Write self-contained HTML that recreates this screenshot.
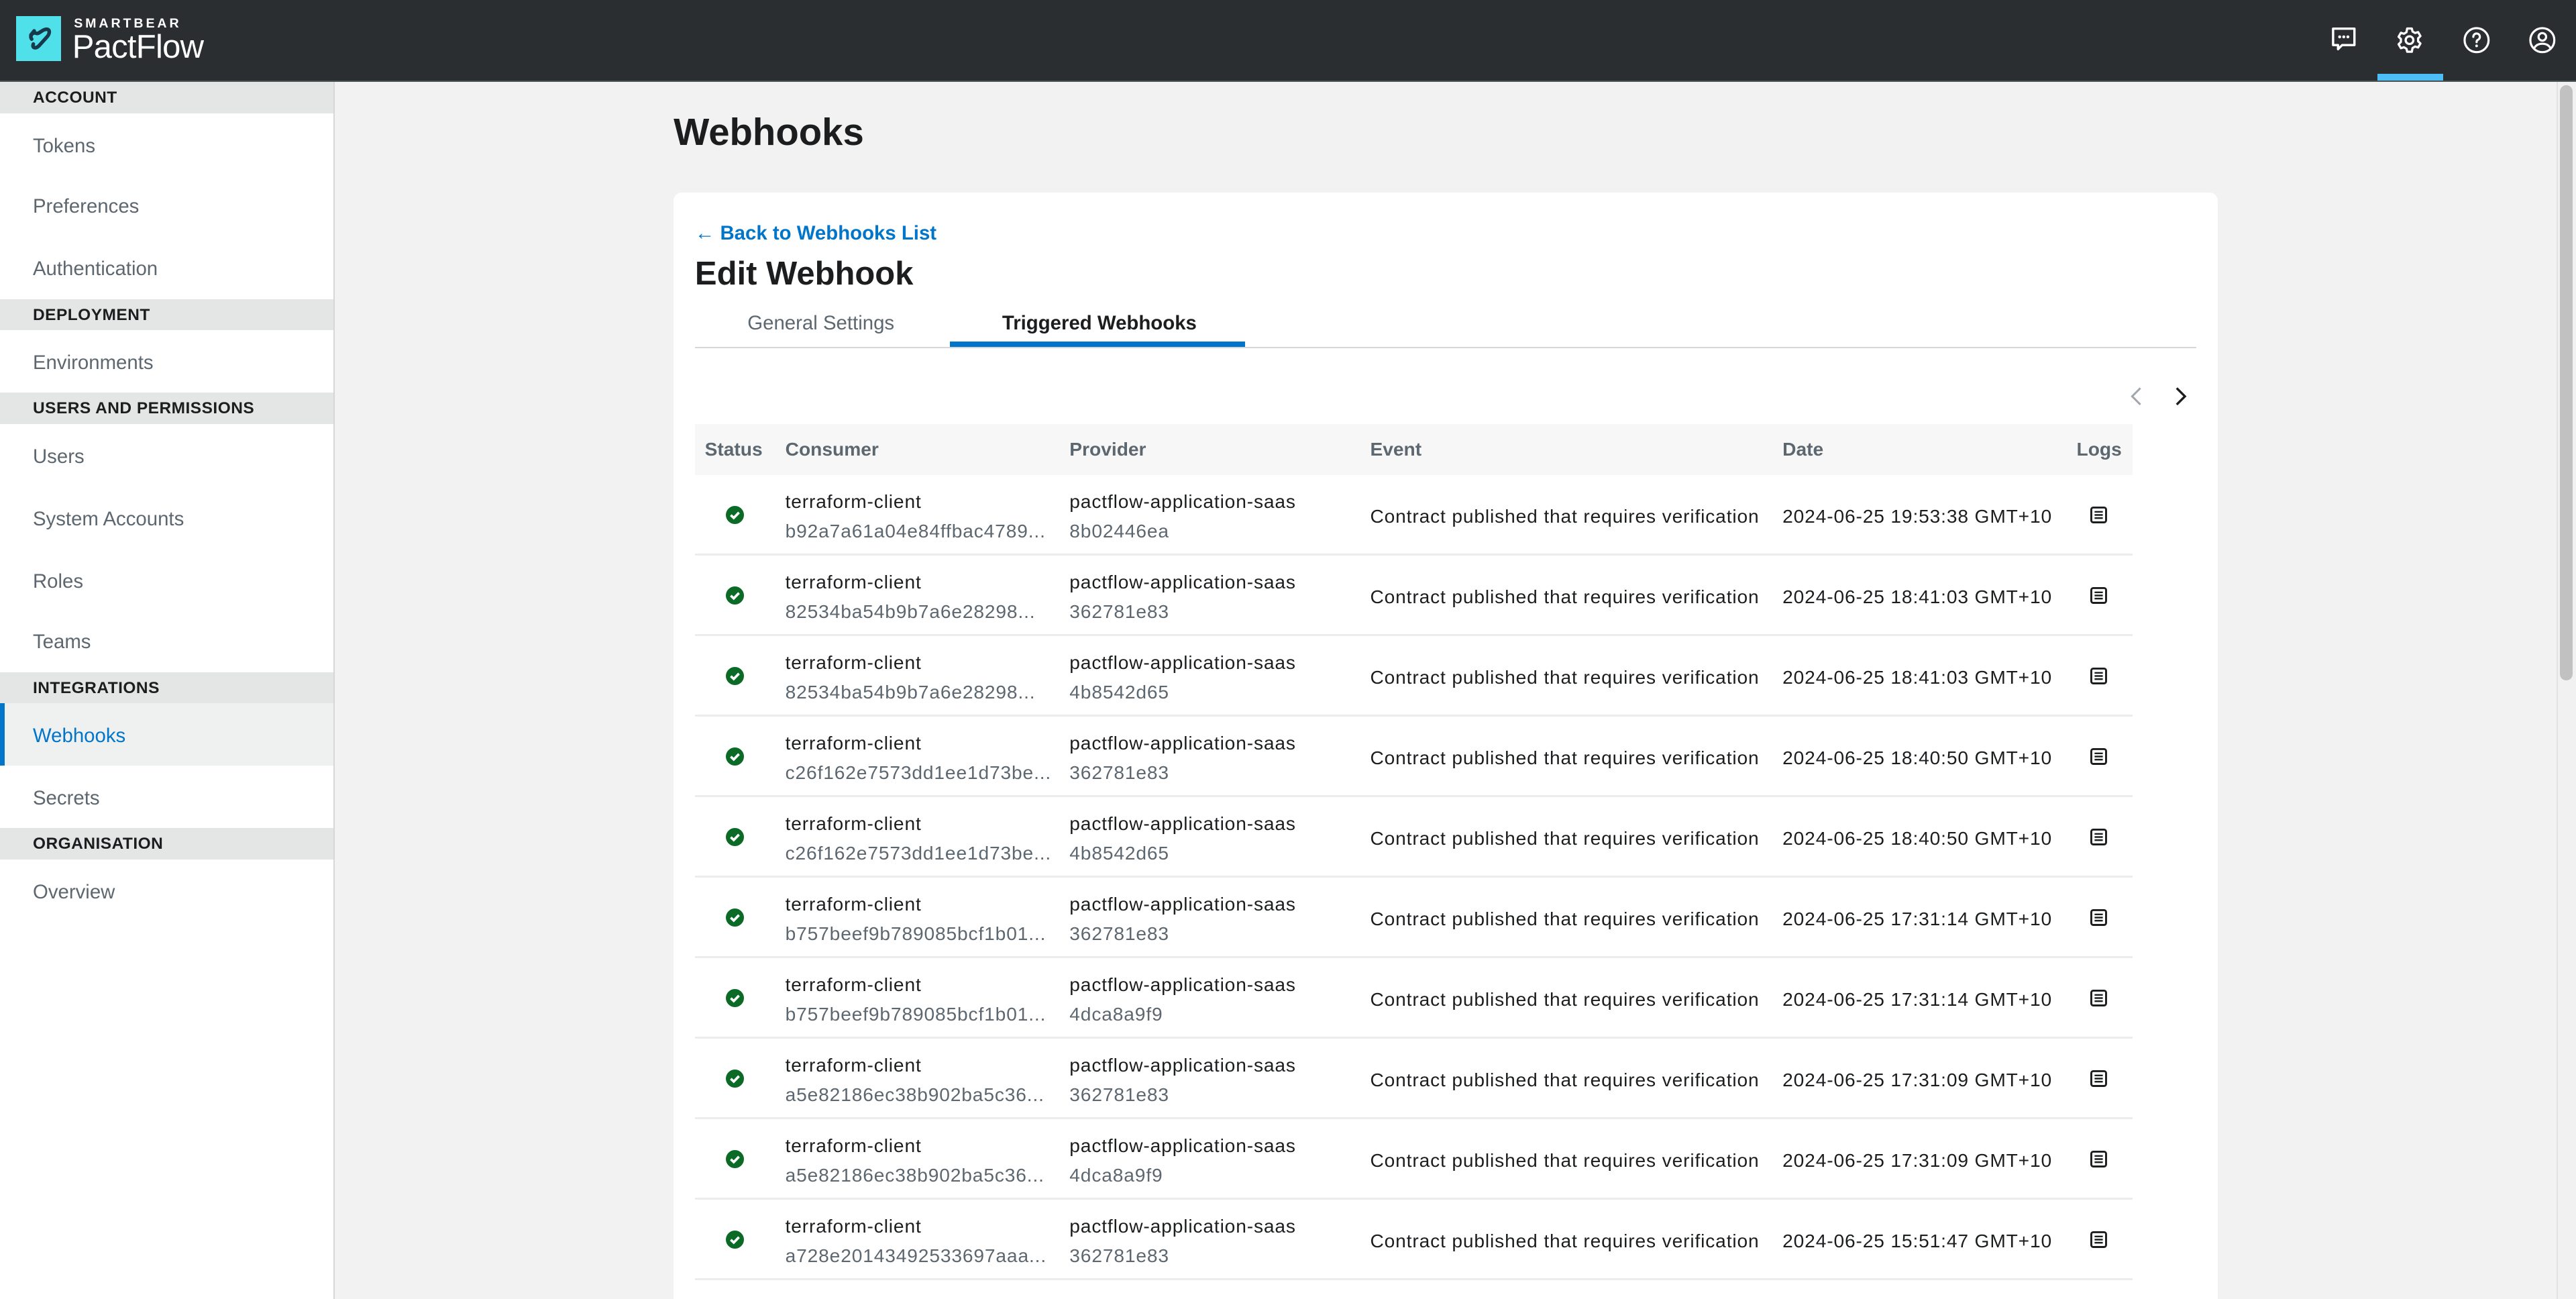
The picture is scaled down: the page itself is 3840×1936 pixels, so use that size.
<!DOCTYPE html>
<html><head><meta charset="utf-8"><style>
html,body{margin:0;padding:0;width:3840px;height:1936px;overflow:hidden;background:#f1f2f1}
#w{zoom:2.44898;width:1568px;height:791px;position:relative;font-family:"Liberation Sans",sans-serif;color:#1b1d1f;overflow:hidden}
.a{position:absolute;white-space:nowrap}
svg{display:block}
#hdr{position:absolute;left:0;top:0;width:1568px;height:49px;background:#2b2e31;border-bottom:1px solid #4b5357}
#side{position:absolute;left:0;top:50px;width:203px;height:741px;background:#fff;border-right:1px solid #d6d8d8}
.sh{position:absolute;left:0;width:203px;height:19px;background:#e4e6e5;font-size:10px;font-weight:bold;line-height:20px;text-indent:20px;letter-spacing:.2px}
.si{position:absolute;left:20px;font-size:12px;color:#5d6770;margin-top:1px}
#card{position:absolute;left:410px;top:117px;width:940px;height:700px;background:#fff;border-radius:5px}
.th{position:absolute;top:267px;font-size:11.5px;font-weight:bold;color:#5d6770}
.r1{font-size:11.5px;color:#1b1d1f;letter-spacing:.35px}
.r2{font-size:11.5px;color:#5d6770;letter-spacing:.35px}
.chk{position:absolute;left:442px;width:11px;height:11px;border-radius:50%;background:#0b6b26}
</style></head><body><div id="w">
<div id="hdr">
 <div class="a" style="left:10px;top:10px;width:27px;height:27px;background:#4fe0ea">
  <svg width="27" height="27" viewBox="0 0 27 27"><path d="M11 9 L9 11.5 M9.5 14 C8 12 10 9.5 12.5 10.5 C14 11 16 8 18.5 8 C21 8 20.5 11 18.5 13 L14 18 C12 20 9.5 19.5 10.5 17" fill="none" stroke="#173a4a" stroke-width="2.2" stroke-linecap="round"/></svg>
 </div>
 <div class="a" style="left:45px;top:10px;font-size:8px;font-weight:bold;letter-spacing:1.6px;color:#fff">SMARTBEAR</div>
 <div class="a" style="left:44px;top:17px;font-size:20px;color:#fff;letter-spacing:-.3px">PactFlow</div>
 <svg class="a" style="left:1418px;top:16px" width="17" height="17" viewBox="0 0 17 17"><path d="M2 1.5h13v10H7.5L5 14v-2.5H2z" fill="none" stroke="#fff" stroke-width="1.4" stroke-linejoin="round"/><circle cx="6" cy="6.5" r=".9" fill="#fff"/><circle cx="8.5" cy="6.5" r=".9" fill="#fff"/><circle cx="11" cy="6.5" r=".9" fill="#fff"/></svg>
 <svg class="a" style="left:1458px;top:16px" width="17" height="17" viewBox="0 0 24 24"><path d="M10 2h4l.6 2.6 2.2 1.3 2.6-.8 2 3.4-2 1.9v2.6l2 1.9-2 3.4-2.6-.8-2.2 1.3L14 22h-4l-.6-2.6-2.2-1.3-2.6.8-2-3.4 2-1.9v-2.6l-2-1.9 2-3.4 2.6.8 2.2-1.3z" fill="none" stroke="#fff" stroke-width="1.9" stroke-linejoin="round"/><circle cx="12" cy="12" r="3.3" fill="none" stroke="#fff" stroke-width="1.9"/></svg>
 <div class="a" style="left:1447px;top:45px;width:40px;height:4px;background:#4cbef5"></div>
 <svg class="a" style="left:1499px;top:16px" width="17" height="17" viewBox="0 0 17 17"><circle cx="8.5" cy="8.5" r="7.3" fill="none" stroke="#fff" stroke-width="1.3"/><path d="M6.5 6.5a2 2 0 1 1 2.8 1.8c-.6.3-.8.7-.8 1.4" fill="none" stroke="#fff" stroke-width="1.3" stroke-linecap="round"/><circle cx="8.5" cy="12" r=".8" fill="#fff"/></svg>
 <svg class="a" style="left:1539px;top:16px" width="17" height="17" viewBox="0 0 17 17"><circle cx="8.5" cy="8.5" r="7.3" fill="none" stroke="#fff" stroke-width="1.3"/><circle cx="8.5" cy="6.5" r="2.3" fill="none" stroke="#fff" stroke-width="1.3"/><path d="M3.5 13.5c1-2 3-2.8 5-2.8s4 .8 5 2.8" fill="none" stroke="#fff" stroke-width="1.3"/></svg>
</div>
<div id="side">
 <div class="sh" style="top:0">ACCOUNT</div>
 <div class="si" style="top:31px">Tokens</div>
 <div class="si" style="top:68px">Preferences</div>
 <div class="si" style="top:106px">Authentication</div>
 <div class="sh" style="top:132px">DEPLOYMENT</div>
 <div class="si" style="top:163px">Environments</div>
 <div class="sh" style="top:189px">USERS AND PERMISSIONS</div>
 <div class="si" style="top:220px">Users</div>
 <div class="si" style="top:258px">System Accounts</div>
 <div class="si" style="top:296px">Roles</div>
 <div class="si" style="top:333px">Teams</div>
 <div class="sh" style="top:359px">INTEGRATIONS</div>
 <div class="a" style="left:0;top:378px;width:203px;height:38px;background:#eff1f0;border-left:3px solid #0075c9;box-sizing:border-box"></div>
 <div class="si" style="top:390px;color:#0075c9">Webhooks</div>
 <div class="si" style="top:428px">Secrets</div>
 <div class="sh" style="top:454px">ORGANISATION</div>
 <div class="si" style="top:485px">Overview</div>
</div>
<div class="a" style="left:1556px;top:50px;width:12px;height:741px;background:#f1f1f1;border-left:1px solid #e2e2e2"></div>
<div class="a" style="left:1558px;top:52px;width:8px;height:362px;background:#c1c1c1;border-radius:4px"></div>
<div class="a" style="left:410px;top:67px;font-size:23px;font-weight:bold">Webhooks</div>
<div id="card"></div>
<div class="a" style="left:423px;top:135px;font-size:12px;font-weight:bold;color:#0075c9">← Back to Webhooks List</div>
<div class="a" style="left:423px;top:155px;font-size:20px;font-weight:bold">Edit Webhook</div>
<div class="a" style="left:455px;top:190px;font-size:12px;color:#5d6770">General Settings</div>
<div class="a" style="left:610px;top:190px;font-size:12px;font-weight:bold;color:#1b1d1f">Triggered Webhooks</div>
<div class="a" style="left:423px;top:211px;width:914px;height:1px;background:#d6d8d8"></div>
<div class="a" style="left:578px;top:208px;width:180px;height:3px;background:#0075c9"></div>
<svg class="a" style="left:1295px;top:235px" width="12" height="12" viewBox="0 0 12 12"><path d="M8 1 3 6l5 5" fill="none" stroke="#a0a6ab" stroke-width="1.2"/></svg>
<svg class="a" style="left:1321px;top:235px" width="12" height="12" viewBox="0 0 12 12"><path d="M4 1l5 5-5 5" fill="none" stroke="#1b1d1f" stroke-width="1.4"/></svg>
<div class="a" style="left:423px;top:258px;width:875px;height:31px;background:#f7f7f7"></div>
<div class="th" style="left:429px">Status</div>
<div class="th" style="left:478px">Consumer</div>
<div class="th" style="left:651px">Provider</div>
<div class="th" style="left:834px">Event</div>
<div class="th" style="left:1085px">Date</div>
<div class="th" style="left:1264px">Logs</div>
<div id="rows"></div>
<script>
var d=[["b92a7a61a04e84ffbac4789...","8b02446ea","19:53:38"],["82534ba54b9b7a6e28298...","362781e83","18:41:03"],["82534ba54b9b7a6e28298...","4b8542d65","18:41:03"],["c26f162e7573dd1ee1d73be...","362781e83","18:40:50"],["c26f162e7573dd1ee1d73be...","4b8542d65","18:40:50"],["b757beef9b789085bcf1b01...","362781e83","17:31:14"],["b757beef9b789085bcf1b01...","4dca8a9f9","17:31:14"],["a5e82186ec38b902ba5c36...","362781e83","17:31:09"],["a5e82186ec38b902ba5c36...","4dca8a9f9","17:31:09"],["a728e20143492533697aaa...","362781e83","15:51:47"],["a728e20143492533697aaa...","4b8542d65","15:51:47"]];
var h="";
for(var i=0;i<d.length;i++){var t=289+i*49;
h+='<div class="chk" style="top:'+(t+19)+'px"><svg width="11" height="11" viewBox="0 0 11 11"><path d="M3 5.6l1.8 1.7L8 4" fill="none" stroke="#fff" stroke-width="1.5"/></svg></div>';
h+='<div class="a r1" style="left:478px;top:'+(t+10)+'px">terraform-client</div>';
h+='<div class="a r2" style="left:478px;top:'+(t+28)+'px">'+d[i][0]+'</div>';
h+='<div class="a r1" style="left:651px;top:'+(t+10)+'px">pactflow-application-saas</div>';
h+='<div class="a r2" style="left:651px;top:'+(t+28)+'px">'+d[i][1]+'</div>';
h+='<div class="a r1" style="left:834px;top:'+(t+19)+'px">Contract published that requires verification</div>';
h+='<div class="a r1" style="left:1085px;top:'+(t+19)+'px">2024-06-25 '+d[i][2]+' GMT+10</div>';
h+='<svg class="a" style="left:1272px;top:'+(t+19)+'px" width="11" height="11" viewBox="0 0 11 11"><rect x="1" y="1" width="9" height="9" rx="1.2" fill="none" stroke="#1b1d1f" stroke-width="1.2"/><path d="M3 3.6h5M3 5.5h5M3 7.4h5" stroke="#1b1d1f" stroke-width="1"/></svg>';
h+='<div class="a" style="left:423px;top:'+(t+48)+'px;width:875px;height:1px;background:#ececec"></div>';}
document.getElementById("rows").innerHTML=h;
</script>
</div></body></html>
